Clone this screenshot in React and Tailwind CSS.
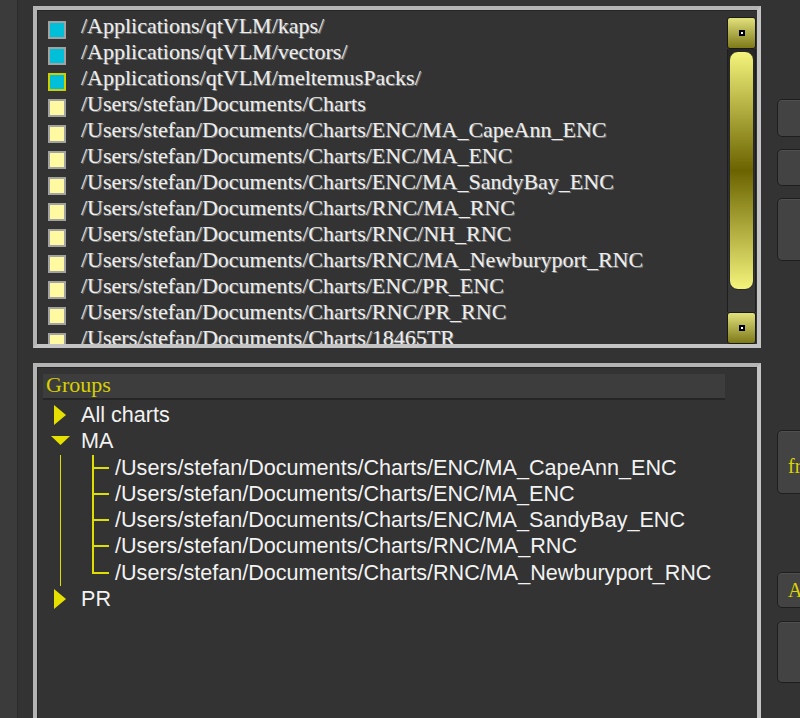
import React from "react";

const serif = "font-['Liberation_Serif','Times_New_Roman',serif]";
const sans = "font-['Liberation_Sans',Arial,sans-serif]";

const paths = [
  { path: "/Applications/qtVLM/kaps/", color: "cyan" },
  { path: "/Applications/qtVLM/vectors/", color: "cyan" },
  { path: "/Applications/qtVLM/meltemusPacks/", color: "cyan", focus: true },
  { path: "/Users/stefan/Documents/Charts", color: "yellow" },
  { path: "/Users/stefan/Documents/Charts/ENC/MA_CapeAnn_ENC", color: "yellow" },
  { path: "/Users/stefan/Documents/Charts/ENC/MA_ENC", color: "yellow" },
  { path: "/Users/stefan/Documents/Charts/ENC/MA_SandyBay_ENC", color: "yellow" },
  { path: "/Users/stefan/Documents/Charts/RNC/MA_RNC", color: "yellow" },
  { path: "/Users/stefan/Documents/Charts/RNC/NH_RNC", color: "yellow" },
  { path: "/Users/stefan/Documents/Charts/RNC/MA_Newburyport_RNC", color: "yellow" },
  { path: "/Users/stefan/Documents/Charts/ENC/PR_ENC", color: "yellow" },
  { path: "/Users/stefan/Documents/Charts/RNC/PR_RNC", color: "yellow" },
  { path: "/Users/stefan/Documents/Charts/18465TR", color: "yellow" },
];

const maCharts = [
  "/Users/stefan/Documents/Charts/ENC/MA_CapeAnn_ENC",
  "/Users/stefan/Documents/Charts/ENC/MA_ENC",
  "/Users/stefan/Documents/Charts/ENC/MA_SandyBay_ENC",
  "/Users/stefan/Documents/Charts/RNC/MA_RNC",
  "/Users/stefan/Documents/Charts/RNC/MA_Newburyport_RNC",
];

// Small yellow arrow of the tree view
const Arrow = ({ open }) =>
  open ? (
    <svg width="19" height="10" viewBox="0 0 19 10">
      <polygon points="0,0 19,0 9.5,9" fill="#e6e000" />
    </svg>
  ) : (
    <svg width="12" height="20" viewBox="0 0 12 20">
      <polygon points="0,0 12,10 0,20" fill="#e6e000" />
    </svg>
  );

const ScrollButton = () => (
  <div className="h-[32px] rounded-[3px] border border-[#1a1a1a] bg-gradient-to-b from-[#e2e27c] to-[#7f7a14] flex items-center justify-center">
    <div className="w-[6px] h-[6px] bg-black flex items-center justify-center">
      <div className="w-[2px] h-[2px] bg-white"></div>
    </div>
  </div>
);

const SideButton = ({ className, children }) => (
  <div
    className={`w-[60px] rounded-[5px] border border-[#1e1e1e] bg-[#434343] shadow-[inset_0_1px_0_#505050] text-[#dcd400] text-[20px] ${serif} pl-[10px] ${className}`}
  >
    {children}
  </div>
);

const App = () => {
  return (
    <div className="w-[800px] h-[718px] overflow-hidden flex bg-[#333333]">
      {/* left strip */}
      <div className="w-[18px] shrink-0 bg-[#3b3b3b] border-r border-[#2a2a2a]"></div>

      <div className="w-[728px] shrink-0 ml-[15px] pt-[6px] flex flex-col gap-[15px]">
        {/* chart folders list */}
        <div className="h-[342px] shrink-0 border-4 border-t-[#b4b4b4] border-l-[#b4b4b4] border-r-[#c4c4c4] border-b-[#c4c4c4]">
          <div className="h-full flex border-t border-l border-[#262626] pt-[6px] pr-[1px]">
            <div className="flex-1 overflow-hidden">
              {paths.map((p, i) => (
                <div key={i} className="h-[26px] flex items-center">
                  <div
                    className={`ml-[10px] w-[18px] h-[18px] shrink-0 border-2 ${
                      p.focus ? "border-[#cfcf00]" : "border-[#a2a2a2]"
                    } ${p.color === "cyan" ? "bg-[#00bfd8]" : "bg-[#fffaa2]"}`}
                  ></div>
                  <span
                    className={`ml-[15px] pb-[8px] whitespace-nowrap text-[22px] leading-[18px] text-[#ededed] ${serif} [text-shadow:1px_1px_0_#808080]`}
                  >
                    {p.path}
                  </span>
                </div>
              ))}
            </div>
            {/* scrollbar */}
            <div className="w-[29px] shrink-0 flex flex-col">
              <ScrollButton />
              <div className="flex-1 bg-gradient-to-b from-[#262626] to-[#3a3a3a] border-x border-[#1e1e1e] px-[1px] pt-[2px] pb-[22px]">
                <div className="h-full rounded-[9px] border border-[#2a2a2a] bg-[linear-gradient(to_bottom,#f4f47c_0%,#6b6300_50%,#f4f47c_100%)]"></div>
              </div>
              <ScrollButton />
            </div>
          </div>
        </div>

        {/* groups tree */}
        <div className="h-[400px] shrink-0 border-4 border-t-[#b4b4b4] border-l-[#b4b4b4] border-r-[#c4c4c4] border-b-[#c4c4c4]">
          <div className="h-full border-t border-l border-[#262626] pt-[6px] pl-[5px] pr-[32px]">
            <div className="h-[26px] bg-[#3d3d3d] border-b-2 border-[#262626] flex items-center">
              <span className={`ml-[3px] pb-[4px] text-[22px] text-[#d8d000] ${serif}`}>Groups</span>
            </div>
            <div className={`pt-[2px] text-[21.6px] text-[#f2f2f2] ${sans}`}>
              <div className="h-[26.3px] flex items-center">
                <div className="w-[34px] flex justify-center">
                  <Arrow />
                </div>
                <span className="ml-[4px]">All charts</span>
              </div>
              <div className="h-[26.3px] flex items-center">
                <div className="w-[34px] flex justify-center">
                  <Arrow open />
                </div>
                <span className="ml-[4px]">MA</span>
              </div>
              <div className="flex">
                <div className="w-[34px] shrink-0 pl-[17px]">
                  <div className="w-[1px] h-full bg-[#dede00]"></div>
                </div>
                <div className="flex-1">
                  {maCharts.map((c, i) => (
                    <div key={i} className="h-[26.3px] flex">
                      <div className="w-[17px] ml-[15px] shrink-0 flex flex-col">
                        <div className="h-[14px] border-l-2 border-b-2 border-[#dede00]"></div>
                        {i < maCharts.length - 1 && (
                          <div className="flex-1 border-l-2 border-[#dede00]"></div>
                        )}
                      </div>
                      <span className="ml-[6px] self-center whitespace-nowrap">{c}</span>
                    </div>
                  ))}
                </div>
              </div>
              <div className="h-[26.3px] flex items-center">
                <div className="w-[34px] flex justify-center">
                  <Arrow />
                </div>
                <span className="ml-[4px]">PR</span>
              </div>
            </div>
          </div>
        </div>
      </div>

      {/* buttons on the right, cut by the window edge */}
      <div className="ml-[16px] shrink-0 flex flex-col">
        <SideButton className="mt-[99px] h-[38px]" />
        <SideButton className="mt-[12px] h-[37px]" />
        <SideButton className="mt-[12px] h-[63px]" />
        <SideButton className="mt-[169px] h-[64px] pt-[20px]">fr</SideButton>
        <SideButton className="mt-[78px] h-[36px] pt-[2px]">A</SideButton>
        <SideButton className="mt-[13px] h-[62px]" />
      </div>
    </div>
  );
};

export default App;
